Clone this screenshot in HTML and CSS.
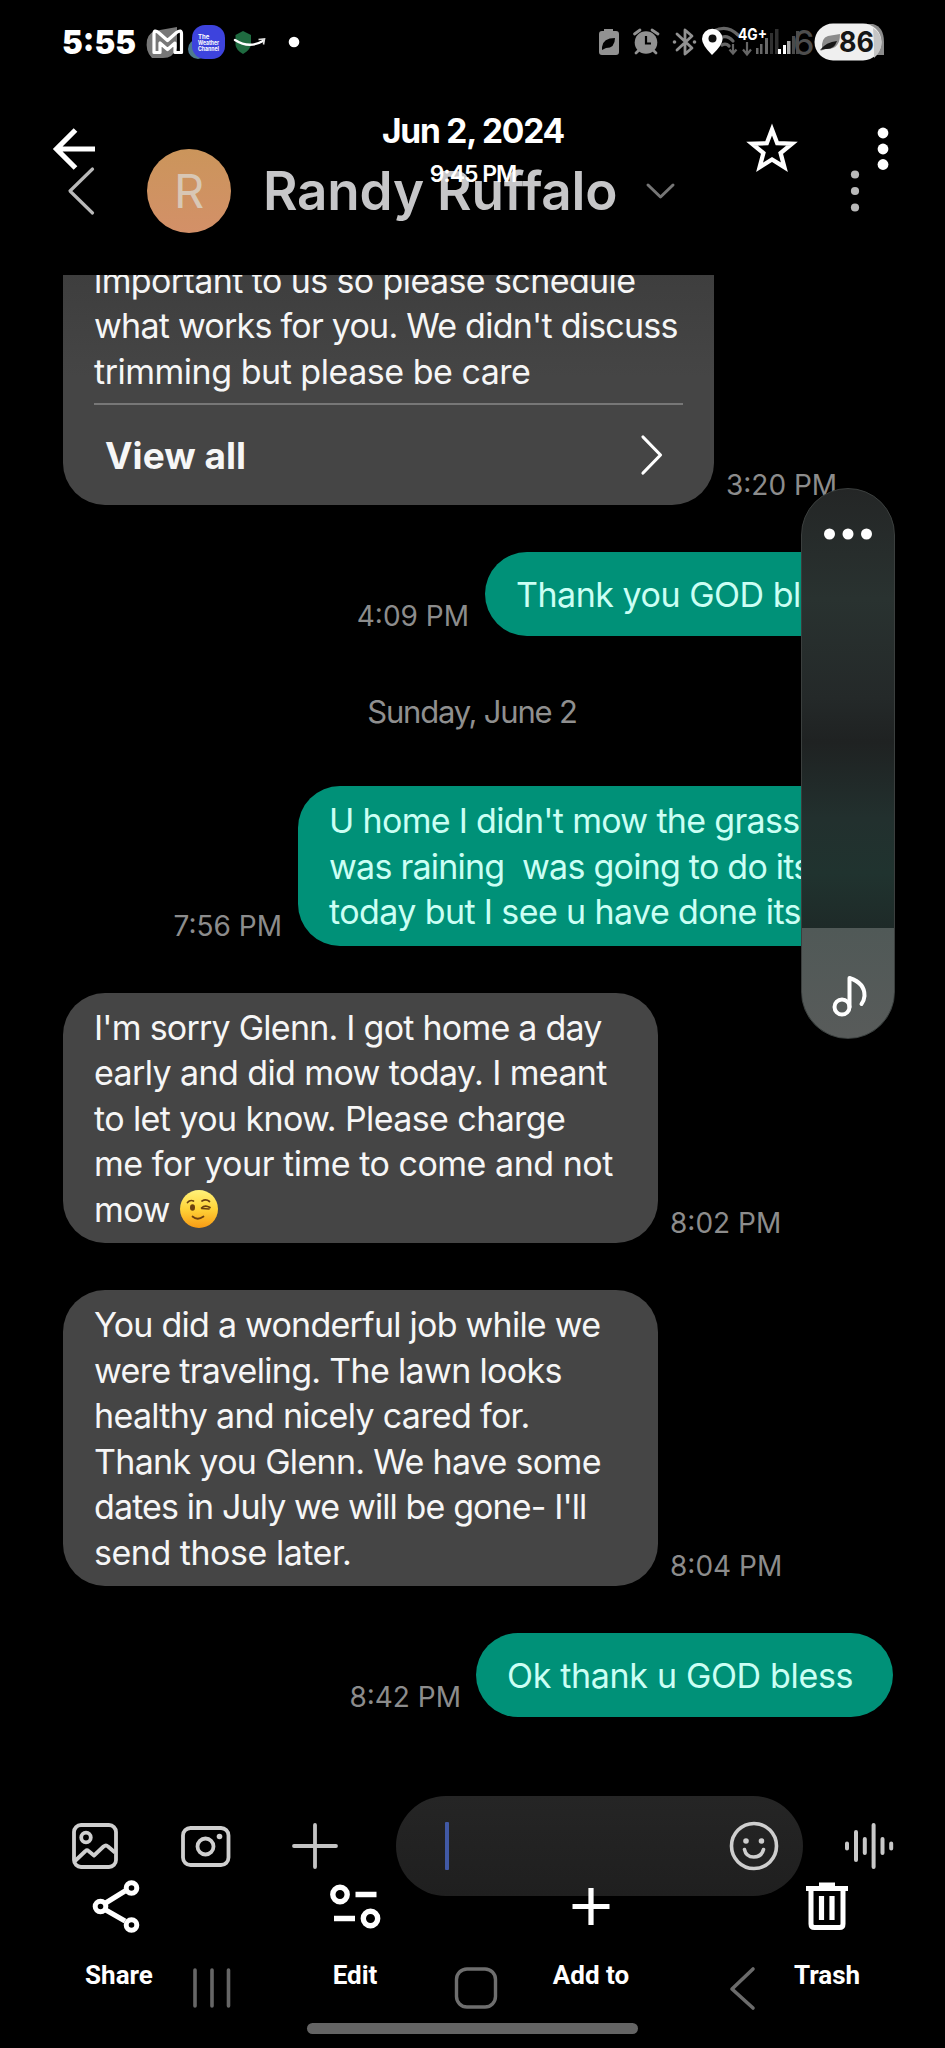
FILE: index.html
```
<!DOCTYPE html>
<html lang="en">
<head>
<meta charset="utf-8">
<title>Messages</title>
<link rel="stylesheet" href="styles.css">
</head>
<body>
<div class="phone">

  <div class="screen">
    <div class="statusbar">
      <svg class="status-svg" width="945" height="90" viewBox="0 0 945 90">
        <text x="62" y="54" class="clock" textLength="74" lengthAdjust="spacingAndGlyphs">5:55</text>
        <!-- mail -->
        <path d="M147 40 Q149 31 160 30 L177 27 V48 Q173 58 163 58 H152 Q145 51 147 40Z" fill="#777"/>
        <path d="M154 52.500V34Q154 29 158.500 32.500L167.500 40.500L176.500 32.500Q181.500 29 181.500 34V52.500H175V43L167.500 49.500L160 43V52.500Z" fill="none" stroke="#fff" stroke-width="3.200" stroke-linejoin="round"/>
        <!-- weather -->
        <circle cx="198" cy="49" r="10" fill="#4d7b8d"/>
        <rect x="192" y="25" width="33" height="34" rx="13" fill="#3d43dd"/>
        <text x="198" y="39" class="tiny">The</text>
        <text x="198" y="45" class="tiny" textLength="21" lengthAdjust="spacingAndGlyphs">Weather</text>
        <text x="198" y="51" class="tiny" textLength="21" lengthAdjust="spacingAndGlyphs">Channel</text>
        <!-- shield -->
        <path d="M243 31L251 35V45Q250 50 243 54Q236 50 235.500 45V35Z" fill="#1f6b40"/>
        <path d="M235 40Q249 49 263 41" fill="none" stroke="#fff" stroke-width="2.400" stroke-linecap="round"/>
        <path d="M258.500 39.500L264.500 39L263.500 44.500" fill="none" stroke="#ddd" stroke-width="1.600"/>
        <circle cx="294" cy="42" r="5.300" fill="#fff"/>
        <!-- battery saver -->
        <path d="M604 29h9v2h3q3 0 3 3v18q0 3-3 3h-14q-3 0-3-3v-18q0-3 3-3h2z" fill="#919191"/>
        <path d="M602 47Q603 38 615 38Q615 48 606 48L602 50Z" fill="#000"/>
        <!-- alarm -->
        <circle cx="646" cy="42.500" r="11.300" fill="#919191"/>
        <path d="M634.500 34L640 30M652 30L658 34M639 50L636 53M653 50L656 53" stroke="#919191" stroke-width="2.800" stroke-linecap="round"/>
        <path d="M646 36V43.500H651" fill="none" stroke="#000" stroke-width="2.200"/>
        <!-- bluetooth -->
        <path d="M677 34L692 48L685 54V30L692 36L677 50" fill="none" stroke="#919191" stroke-width="2.800" stroke-linejoin="round" stroke-linecap="round"/>
        <circle cx="674.500" cy="42" r="1.800" fill="#919191"/><circle cx="694.500" cy="42" r="1.800" fill="#919191"/>
        <!-- wifi -->
        <g fill="none" stroke="#666" stroke-width="3.200" stroke-linecap="round">
          <path d="M714 31Q727 24 738 35"/><path d="M720 38Q727 34 733 41"/><path d="M722 45Q726 43 729 46"/>
        </g>
        <path d="M733 44v9m-3.500-3.500l3.500 4l3.500-4M747 42v11m-4-3.500l4 5l4-5" fill="none" stroke="#666" stroke-width="2.200"/>
        <!-- location -->
        <path d="M712 55Q702 45 702 39A10.300 10.300 0 0 1 722.600 39Q722.600 45 712 55Z" fill="#fff"/>
        <circle cx="712.500" cy="38.500" r="4" fill="#111"/>
        <!-- signal -->
        <g fill="#686868"><rect x="756" y="48" width="2.500" height="6"/><rect x="760" y="44" width="2.500" height="10"/><rect x="765" y="38" width="3" height="16"/></g>
        <g fill="#303030"><rect x="770" y="33" width="3" height="21"/><rect x="775" y="29" width="3.500" height="25"/></g>
        <text x="738" y="40" class="net" textLength="29" lengthAdjust="spacingAndGlyphs">4G+</text>
        <g fill="#fff"><rect x="778" y="49" width="3" height="5"/><rect x="783" y="45" width="3" height="9"/></g>
        <g fill="#aaa"><rect x="787" y="41" width="3.500" height="13"/></g>
        <g fill="#4a4a4a"><rect x="792" y="36" width="3" height="18"/><rect x="796" y="31" width="3" height="23"/></g>
        <text x="793" y="54.500" class="ghost-digit">6</text>
        <!-- battery -->
        <path d="M865 24h8q11 3 11 18v13h-14z" fill="#8c8c8c"/>
        <rect x="814.500" y="23.500" width="67" height="37" rx="18.500" fill="#efefef"/>
        <path d="M873 28Q881.500 33 881.500 43Q881 52 874 58V44Z" fill="#c5c5c5"/>
        <path d="M822 49Q821 38 828 36L840 34Q840 50 826 49L820 51" fill="#8b8b8b"/>
        <path d="M820 50Q826 42 837 41Q834 50 825 49Z" fill="#161616"/>
        <text x="839" y="52" class="battery" textLength="35" lengthAdjust="spacingAndGlyphs">86</text>
      </svg>
    </div>

    <header class="chat-header">
      <svg class="back" width="29" height="52" viewBox="0 0 29 52"><path d="M25.500 4L3 26L25.500 48" fill="none" stroke="#b9b9b9" stroke-width="3.200" stroke-linecap="round" stroke-linejoin="round"/></svg>
      <div class="avatar">R</div>
      <div class="contact">Randy Ruffalo</div>
      <svg class="expand" width="31" height="18" viewBox="0 0 31 18"><path d="M3 3L15.500 15L28 3" fill="none" stroke="#767676" stroke-width="3" stroke-linecap="round" stroke-linejoin="round"/></svg>
      <svg class="kebab" width="10" height="44" viewBox="0 0 10 44" fill="#b9b9b9"><circle cx="5" cy="5.500" r="4.100"/><circle cx="5" cy="22" r="4.100"/><circle cx="5" cy="38.500" r="4.100"/></svg>
    </header>

    <main class="thread">
      <div class="row in">
        <div class="bubble long">
          <div class="text"><span class="snug">important to us so please schedule</span><span class="tighter">what works for you. We didn't discuss</span><span class="loose">trimming but please be care</span></div>
          <div class="view-all"><span>View all</span>
            <svg width="26" height="44" viewBox="0 0 26 44"><path d="M4 4L21.500 22L4 40" fill="none" stroke="#fff" stroke-width="3.200" stroke-linecap="round" stroke-linejoin="round"/></svg>
          </div>
        </div>
        <time class="near">3:20 PM</time>
      </div>
      <div class="row out"><time>4:09 PM</time><div class="bubble b-thanks"><div class="text"><span class="loose">Thank you GOD bless</span></div></div></div>
      <div class="date">Sunday, June 2</div>
      <div class="row out"><time>7:56 PM</time><div class="bubble b-home"><div class="text"><span class="tight">U home I didn't mow the grass it</span><span class="tighter">was raining&nbsp; was going to do its</span><span class="snug">today but I see u have done its</span></div></div></div>
      <div class="row in"><div class="bubble std"><div class="text"><span class="tighter">I'm sorry Glenn. I got home a day</span><span class="snug">early and did mow today. I meant</span><span class="snug">to let you know. Please charge</span><span class="loose">me for your time to come and not</span><span class="loose">mow <svg class="wink" width="40" height="40" viewBox="0 0 40 40">
        <defs><linearGradient id="face" x1="0" y1="0" x2="0" y2="1"><stop offset="0" stop-color="#fff27a"/><stop offset=".5" stop-color="#ffd338"/><stop offset="1" stop-color="#f79a14"/></linearGradient></defs>
        <circle cx="20" cy="20" r="19" fill="url(#face)"/><ellipse cx="13.500" cy="18.500" rx="2.500" ry="3.200" fill="#6b4010"/><path d="M8.500 13.500Q11 10.500 14.500 12M23 12Q27 9.500 30.500 12.500M22.500 19Q26 15.500 31 18.500M23 19.500L30 20M13.500 27.500Q18.500 32 24.500 27.500" fill="none" stroke="#6b4010" stroke-width="1.700" stroke-linecap="round"/></svg></span></div></div><time>8:02 PM</time></div>
      <div class="row in"><div class="bubble std"><div class="text"><span class="tighter">You did a wonderful job while we</span><span class="tight">were traveling. The lawn looks</span><span class="tight">healthy and nicely cared for.</span><span class="tight">Thank you Glenn. We have some</span><span class="tightest">dates in July we will be gone- I'll</span><span class="loose">send those later.</span></div></div><time>8:04 PM</time></div>
      <div class="row out"><time class="close">8:42 PM</time><div class="bubble b-ok"><div class="text"><span class="looser">Ok thank u GOD bless</span></div></div></div>
    </main>

    <div class="composer">
      <svg class="gallery" width="46" height="46" viewBox="0 0 46 46" fill="none" stroke="#cfcfcf" stroke-width="3.800" stroke-linejoin="round"><rect x="2" y="2" width="42" height="42" rx="7"/><circle cx="14" cy="14.500" r="4.800"/><path d="M3 38L13.500 28Q15 26.500 16.500 28L22 32.500L31.500 23.500Q34 21.500 36 23.500L43 29.500"/></svg>
      <svg class="camera" width="50" height="42" viewBox="0 0 50 42" fill="none" stroke="#cfcfcf" stroke-width="3.800"><rect x="2" y="2" width="45.500" height="37" rx="7.500"/><circle cx="24.500" cy="20.500" r="8"/><circle cx="38.500" cy="10.500" r="2.800" fill="#cfcfcf" stroke="none"/></svg>
      <svg class="add" width="46" height="46" viewBox="0 0 46 46"><path d="M23 2V44M2 23H44" stroke="#c4c4c4" stroke-width="3.800" stroke-linecap="round"/></svg>
      <div class="field"><i class="caret"></i>
        <svg width="50" height="50" viewBox="0 0 50 50" fill="none" stroke="#cecece" stroke-width="3.600"><circle cx="25" cy="25" r="22.500"/><circle cx="17" cy="20" r="2.800" fill="#cecece" stroke="none"/><circle cx="32.500" cy="20" r="2.800" fill="#cecece" stroke="none"/><path d="M15.500 28.500Q17 36 24.800 36Q32.500 36 34.500 28.500" stroke-linecap="round"/></svg>
      </div>
      <svg class="voice" width="50" height="50" viewBox="0 0 50 50" stroke="#c8c8c8" stroke-width="4" stroke-linecap="round"><path d="M3 22.500V27.500M12 11V39M20.800 18V32M29.600 4V46M38.500 18V32M47.200 22.500V27.500"/></svg>
    </div>

    <nav class="navbar">
      <svg class="recents" width="40" height="42" viewBox="0 0 40 42" stroke="#666" stroke-width="3.600" stroke-linecap="round"><path d="M3 3V39M20 3V39M36.500 3V39"/></svg>
      <svg class="home" width="44" height="42" viewBox="0 0 44 42"><rect x="2.500" y="2" width="39" height="38" rx="10.500" fill="none" stroke="#6e6e6e" stroke-width="3.400"/></svg>
      <svg class="prev" width="28" height="46" viewBox="0 0 28 46"><path d="M24 3L3 23L24 42" fill="none" stroke="#6b6b6b" stroke-width="3.600" stroke-linecap="round" stroke-linejoin="round"/></svg>
    </nav>
  </div>

  <aside class="volume">
    <svg class="more" width="50" height="12" viewBox="0 0 50 12" fill="#fff"><circle cx="6.500" cy="6" r="5.500"/><circle cx="25" cy="6" r="5.500"/><circle cx="43.500" cy="6" r="5.500"/></svg>
    <div class="level"><svg width="38" height="44" viewBox="0 0 38 44" fill="none" stroke="#fff" stroke-width="4" stroke-linecap="round" stroke-linejoin="round"><ellipse cx="12" cy="33" rx="7.500" ry="7.500"/><path d="M19.500 33V4Q35 9 34.500 22Q34 27 31.500 30"/></svg></div>
  </aside>

  <div class="viewer">
    <div class="viewer-top">
      <svg class="v-back" width="44" height="44" viewBox="0 0 44 44"><path d="M23.500 3L4.500 22L23.500 41M5 22H43" fill="none" stroke="#fff" stroke-width="5.200"/></svg>
      <div class="v-title"><b>Jun 2, 2024</b><small>9:45 PM</small></div>
      <svg class="v-star" width="52" height="50" viewBox="0 0 52 50"><path d="M26 6.500L31.200 20.200L46 20.700L34.600 30L38.400 44.200L26 36.500L13.600 44.200L17.400 30L6 20.700L20.800 20.200Z" fill="none" stroke="#fff" stroke-width="4.300"/></svg>
      <svg class="v-more" width="12" height="44" viewBox="0 0 12 44" fill="#fff"><circle cx="6" cy="6" r="5.400"/><circle cx="6" cy="22" r="5.400"/><circle cx="6" cy="37.500" r="5.400"/></svg>
    </div>
    <div class="viewer-bottom">
      <div class="action a-share"><svg width="52" height="54" viewBox="0 0 52 54" fill="none" stroke="#fff" stroke-width="5"><path d="M14 25L35 12M14 30L35 42"/><circle cx="10.500" cy="27.500" r="5.300"/><circle cx="41.500" cy="9" r="5.300"/><circle cx="41.500" cy="46" r="5.300"/></svg><span>Share</span></div>
      <div class="action a-edit"><svg width="52" height="54" viewBox="0 0 52 54" fill="none" stroke="#fff" stroke-width="5.400"><circle cx="11" cy="15.500" r="7.200"/><circle cx="41.500" cy="39.500" r="7.200"/><path d="M26.500 15.500H47.500M5 39.500H26"/></svg><span>Edit</span></div>
      <div class="action a-add"><svg width="52" height="54" viewBox="0 0 52 54"><path d="M26 9V46M7.500 27.500H44.500" stroke="#fff" stroke-width="5.200"/></svg><span>Add to</span></div>
      <div class="action a-trash"><svg width="52" height="54" viewBox="0 0 52 54" fill="none" stroke="#fff"><path d="M5 9.500H47" stroke-width="5.200"/><path d="M18 6H34" stroke-width="5"/><path d="M10 9V45Q10 48.500 13.500 48.500H38.500Q42 48.500 42 45V9" stroke-width="5"/><path d="M20.500 17V41M31 17V41" stroke-width="5.200"/></svg><span>Trash</span></div>
    </div>
    <div class="handle"></div>
  </div>
</div>
</body>
</html>
```
FILE: styles.css
```
* { box-sizing: border-box; }
body { margin: 0; background: #000; font-family: Inter, "Liberation Sans", sans-serif; }
svg { display: block; flex: none; }
.phone { position: relative; width: 945px; height: 2048px; background: #000; overflow: hidden; }
.screen { display: flex; flex-direction: column; height: 2048px; }

.statusbar { height: 90px; flex: none; }
.clock { font: 900 33px Inter, sans-serif; fill: #fff; }
.tiny { font: 700 6px Inter, sans-serif; fill: #fff; }
.net { font: 700 16px Inter, sans-serif; fill: #fff; }
.ghost-digit { font: 500 34px Inter, sans-serif; fill: #4d4d4d; }
.battery { font: 700 28px Inter, sans-serif; fill: #161616; }

.chat-header { height: 185px; flex: none; display: flex; align-items: center; padding: 17px 0 0 67px; }
.avatar { width: 84px; height: 84px; margin-left: 51px; border-radius: 50%; background: linear-gradient(#cb955b, #d39068); color: #d8c7b5; font-size: 47px; line-height: 84px; text-align: center; }
.contact { margin-left: 32px; width: 355px; font-size: 53px; line-height: 64px; font-weight: 600; letter-spacing: -0.2px; color: #c6c6c8; white-space: nowrap; }
.expand { margin-left: 27px; }
.kebab { margin-left: 174px; }

.thread { height: 1496px; flex: none; display: flex; flex-direction: column; justify-content: flex-end; gap: 47px; padding: 0 52px 54px 63px; overflow: hidden; }
.row { display: flex; align-items: flex-end; }
.out { justify-content: flex-end; }
.bubble { flex: none; border-radius: 42px; background: #454545; color: #f6f6f6; min-height: 84px; padding: 12px 31px 11px; display: flex; flex-direction: column; justify-content: center; }
.out .bubble { background: #009178; color: #cbfff4; padding-left: 31px; padding-right: 0; }
.text { font-size: 34px; line-height: 45.5px; white-space: nowrap; }
.text > span { display: block; width: max-content; }
.looser { letter-spacing: -0.33px; }
.loose { letter-spacing: -0.48px; }
.snug { letter-spacing: -0.6px; }
.tight { letter-spacing: -0.68px; }
.tighter { letter-spacing: -0.76px; }
.tightest { letter-spacing: -0.89px; }
.bubble.long { width: 651px; padding-bottom: 0; border-radius: 0 0 42px 42px; background: linear-gradient(#3c3c3c, #454545 50%); }
.std { width: 595px; }
.b-thanks { width: 408px; }
.b-home { width: 595px; }
.b-ok { width: 417px; }
.view-all { margin-top: 9px; height: 102px; border-top: 2px solid #777; display: flex; align-items: center; justify-content: space-between; padding: 0 18px 0 11px; font-size: 37px; font-weight: 650; }
time { font-size: 28px; line-height: 34px; color: #8c8c8c; margin: 0 16px 3px; white-space: nowrap; }
.in time { margin-left: 12px; }
.out .close { margin-right: 15px; }
.date { height: 56px; line-height: 58px; padding-right: 12px; text-align: center; font-size: 31px; letter-spacing: -1.2px; color: #8f8f8f; }
.wink { display: inline-block; vertical-align: -7px; }

.composer { height: 125px; flex: none; padding: 25px 0 0 72px; display: flex; align-items: flex-start; }
.gallery { margin-top: 27px; }
.camera { margin: 30px 0 0 63px; }
.add { margin: 27px 0 0 61px; }
.field { margin-left: 58px; width: 407px; height: 100px; border-radius: 50px; background: linear-gradient(#252525, #1f1f1f); display: flex; align-items: center; justify-content: space-between; padding: 0 24px 0 49px; }
.caret { width: 4px; height: 48px; background: #4159a5; border-radius: 1px; }
.voice { margin: 25px 0 0 41px; }
.navbar { display: flex; align-items: flex-start; padding: 71px 0 0 192px; }
.home { margin-left: 222px; }
.prev { margin-left: 231px; margin-top: -1px; }

.volume { position: absolute; left: 801px; top: 488px; width: 94px; height: 551px; border-radius: 47px; overflow: hidden; border: 1px solid #3b3f3e; background: linear-gradient(#242626, #293230 20%, #242929 38%, #1f2222 46%, #22302e 60%, #20332f 70%, #1e2a28 80%); display: flex; flex-direction: column; justify-content: space-between; }
.more { margin: 39px auto 0 21px; }
.level { height: 110px; background: linear-gradient(#505957, #585b5a); padding: 46px 0 0 28px; }

.viewer { position: absolute; left: 0; top: 0; width: 945px; height: 2048px; display: flex; flex-direction: column; color: #fff; }
.viewer-top { height: 200px; padding: 110px 0 0 52px; display: flex; align-items: flex-start; }
.v-back { margin-top: 17px; }
.v-title { width: 300px; margin-left: 227px; display: flex; flex-direction: column; align-items: center; white-space: nowrap; }
.v-title b { font-size: 33.5px; line-height: 42px; font-weight: 650; letter-spacing: -1.2px; }
.v-title small { font-size: 23px; line-height: 28px; font-weight: 600; letter-spacing: -1px; margin-top: 8px; }
.v-star { margin: 13px 0 0 123px; }
.v-more { margin: 17px 0 0 79px; }
.viewer-bottom { margin-top: auto; display: flex; height: 125px; padding-left: 1px; flex: none; }
.action { width: 236px; flex: none; display: flex; flex-direction: column; align-items: center; font-family: Roboto, sans-serif; font-size: 26px; font-weight: 700; }
.action svg { margin-top: 1px; }
.a-share svg { margin-right: 6px; }
.action span { line-height: 32px; margin-top: 26px; white-space: nowrap; }
.handle { width: 331px; height: 11px; border-radius: 6px; background: #646464; margin: 20px 0 14px 307px; flex: none; }
```
